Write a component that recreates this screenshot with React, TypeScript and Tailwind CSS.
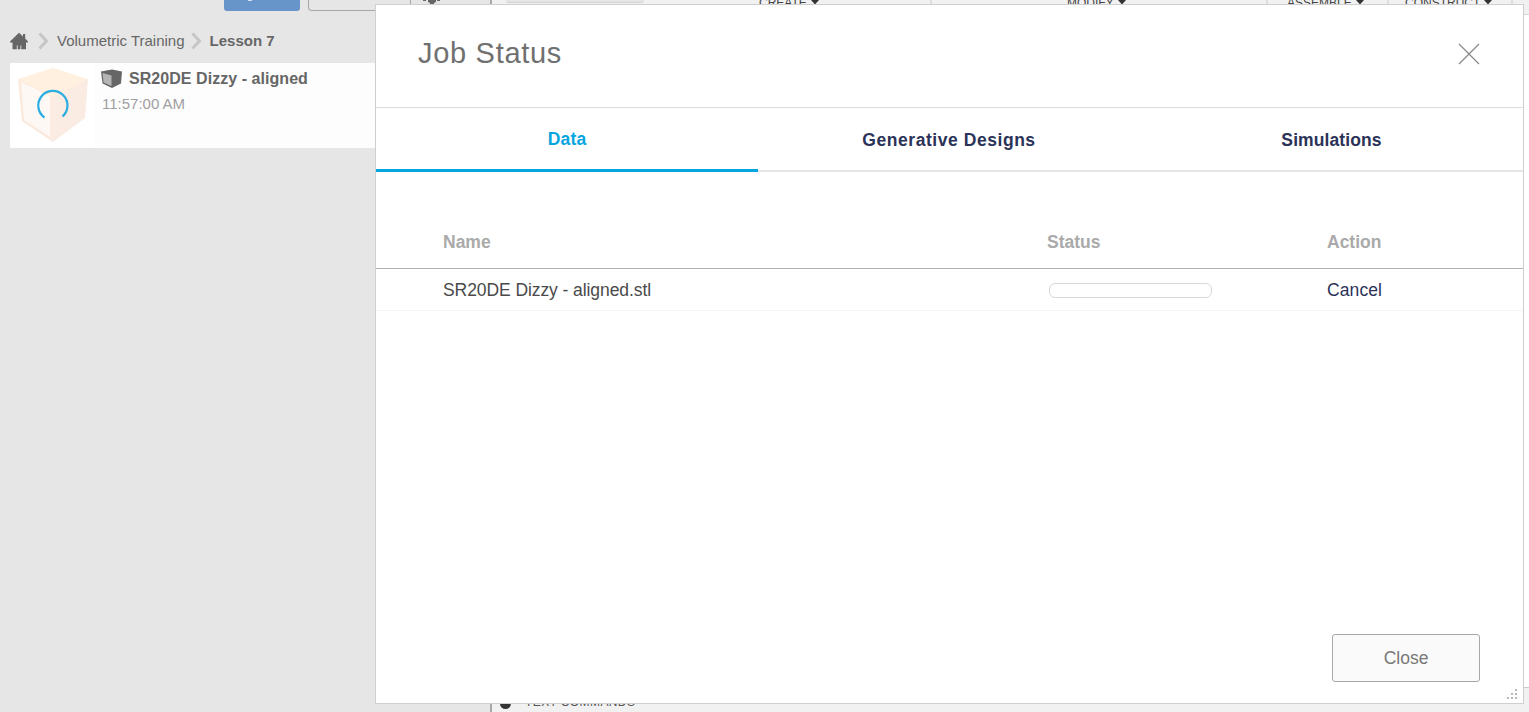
import React from "react";

const menus = [
  { label: "CREATE", cell: "w-[288px]", pad: "pl-[115px]" },
  { label: "MODIFY", cell: "w-[336px]", pad: "pl-[135px]" },
  { label: "ASSEMBLE", cell: "w-[121px]", pad: "pl-[19px]" },
  { label: "CONSTRUCT", cell: "w-[124px]", pad: "pl-[16px]" },
];

function Chevron() {
  return (
    <svg width="11" height="18" viewBox="0 0 11 18" fill="none" stroke="#c6c6c6" strokeWidth="3" className="shrink-0">
      <path d="M1.5 1.5 8.5 9 1.5 16.5" />
    </svg>
  );
}

function Sidebar() {
  return (
    <aside className="flex h-full w-[490px] shrink-0 flex-col bg-[#e6e6e6]">
      <div className="flex h-[11px] items-start">
        <div className="ml-[224px] flex h-[11px] w-[76px] items-start justify-center overflow-hidden rounded-b-[3px] bg-[#6895c9]">
          <div className="-ml-6 h-px w-1 bg-[#d5e1f0]" />
        </div>
        <div className="ml-2 h-[11px] w-[103px] rounded-bl-[4px] border border-t-0 border-[#a6a6a6]" />
        <svg width="18" height="5" viewBox="0 0 18 5" className="ml-[12px]" fill="#666">
          <path d="M0 0h3v1H0zM5 0h8v2l-2 1v1H7V3L5 2zM14 0h3v1h-3z" />
        </svg>
      </div>
      <nav className="mt-[21px] flex h-[18px] items-center text-[15px] text-[#666]">
        <svg width="20" height="18" viewBox="0 0 20 18" fill="#666" className="ml-[9px] shrink-0">
          <path d="M10 .8 14 4.500V2h2.200v4.600L19 9.500v1h-2V17.200H12.300V13.500h-.9v3.700H8.700V13.500h-.9v3.700H3.500V10.500H1v-1z" />
        </svg>
        <span className="ml-[9px] flex"><Chevron /></span>
        <span className="ml-[8px]">Volumetric Training</span>
        <span className="ml-[6px] flex"><Chevron /></span>
        <span className="ml-[8px] font-bold">Lesson 7</span>
      </nav>
      <div className="mt-[13px] ml-[10px] flex h-[85px] bg-[#fdfdfd]">
        <div className="w-[85px] shrink-0 bg-white">
          <svg width="85" height="85" viewBox="0 0 85 85">
            <path d="M8 16 43 27V79L12 58z" fill="#fae9dd" />
            <path d="M11 19 40 33V74L14 57z" fill="#fef8f5" />
            <path d="M40 25 78 16 75 55 43 79 40 76z" fill="#faece2" />
            <path d="M43 5 78 16 43 34 8 16z" fill="#fff0df" />
            <path d="M34.500 54.500a14.600 14.600 0 1 1 18 -1" fill="none" stroke="#2bade2" strokeWidth="2.2" />
          </svg>
        </div>
        <div className="flex flex-col pl-[6px] pt-[5px]">
          <div className="flex h-[21px] items-center">
            <svg width="22" height="20" viewBox="0 0 22 20">
              <path d="M0 2.500 11 .5 21 2.500 20 14.500 11 19 1.500 14.500z" fill="#666" />
              <path d="M1.500 4 10.500 6.500V17L2.500 13.500z" fill="#b4b4b4" />
            </svg>
            <span className="ml-[6px] text-[16px] font-bold tracking-[0.05px] text-[#666]">SR20DE Dizzy - aligned</span>
          </div>
          <span className="mt-[5px] ml-px text-[15px] leading-[20px] text-[#a0a0a0]">11:57:00 AM</span>
        </div>
      </div>
    </aside>
  );
}

function Workspace() {
  return (
    <main className="flex h-full grow flex-col border-l-2 border-[#a8a8a8] bg-white">
      <div className="flex h-[15px] shrink-0 overflow-hidden border-b border-[#d8d8d8] bg-[#f1f1f1]">
        <div className="ml-[14px] h-[3px] w-[138px] rounded-b-[5px] border-b border-[#d2d2d2] bg-[#e5e5e5]" />
        {menus.map((m) => (
          <div key={m.label} className={`flex h-[20px] shrink-0 border-r-2 border-[#dedede] ${m.cell} ${m.pad}`}>
            <span className="-mt-[5px] flex h-[16px] items-center text-[12px] text-[#444]">{m.label}</span>
            <svg width="8" height="5" viewBox="0 0 8 5" className="ml-[4px]" fill="#333">
              <path d="M0 0h8L4 4.500z" />
            </svg>
          </div>
        ))}
      </div>
      <div className="grow border-b border-[#c9c9c9]" />
      <div className="flex h-[24px] shrink-0 items-end bg-[#f1f1f1] pb-[3px] pl-[8px]">
        <span className="size-[11px] rounded-full bg-[#333]" />
        <span className="ml-[14px] text-[12px] leading-[13px] tracking-[0.4px] text-[#555]">TEXT COMMANDS</span>
      </div>
    </main>
  );
}

function JobStatus() {
  return (
    <section role="dialog" className="absolute top-[4px] left-[375px] flex h-[700px] w-[1149px] flex-col border border-[#cfcfcf] bg-white">
      <header className="flex h-[102px] shrink-0 items-center justify-between pr-[43px] pb-[4px] pl-[42px]">
        <h1 className="text-[29px] tracking-[0.7px] text-[#707070]">Job Status</h1>
        <svg width="22" height="22" viewBox="0 0 22 22" stroke="#888" strokeWidth="1.2">
          <path d="M1 1 21 21M21 1 1 21" />
        </svg>
      </header>
      <div className="flex h-[65px] shrink-0 border-t border-[#dcdcdc] text-[17.5px] font-bold text-[#2b3358]">
        <div className="flex w-[382px] items-center justify-center border-b-[3px] border-[#06a5e0] pt-[2px] tracking-[0.2px] text-[#06a5e0]">Data</div>
        <div className="flex w-[382px] items-center justify-center border-b-2 border-[#e5e5e5] pt-[3px] tracking-[0.55px]">Generative Designs</div>
        <div className="flex grow items-center justify-center border-b-2 border-[#e5e5e5] pt-[3px] tracking-[0.1px]">Simulations</div>
      </div>
      <div className="mt-[44px] grid h-[53px] shrink-0 grid-cols-[604px_280px_1fr] items-center border-b border-[#b2b2b2] pl-[67px] text-[17.5px] font-bold text-[#aaa]">
        <span>Name</span>
        <span>Status</span>
        <span>Action</span>
      </div>
      <div className="grid h-[42px] shrink-0 grid-cols-[604px_280px_1fr] items-center border-b border-[#f4f4f4] pl-[67px] text-[17.5px] text-[#4a4a4a]">
        <span className="pt-[2px] tracking-[-0.08px]">SR20DE Dizzy - aligned.stl</span>
        <span className="mt-px ml-[2px] h-[15px] w-[163px] rounded-[6px] border border-[#d8d8d8]" />
        <span className="pt-[2px] tracking-[0.1px] text-[#2b3358]">Cancel</span>
      </div>
      <div className="grow" />
      <div className="flex h-[69px] shrink-0 justify-end">
        <button className="h-[48px] w-[148px] rounded-[3px] border border-[#a8a8a8] bg-[#fafafa] text-[17.5px] text-[#777]">Close</button>
        <svg width="10" height="10" viewBox="0 0 10 10" className="mr-[6px] mb-[4px] ml-[27px] self-end" fill="#b8b8b8">
          <path d="M8 0h2v2H8zM4 4h2v2H4zM8 4h2v2H8zM0 8h2v2H0zM4 8h2v2H4zM8 8h2v2H8z" />
        </svg>
      </div>
    </section>
  );
}

export default function App() {
  return (
    <div className="relative flex h-[712px] w-[1529px] overflow-hidden bg-[#e6e6e6] font-['Liberation_Sans',Arial,sans-serif]">
      <Sidebar />
      <Workspace />
      <JobStatus />
    </div>
  );
}
